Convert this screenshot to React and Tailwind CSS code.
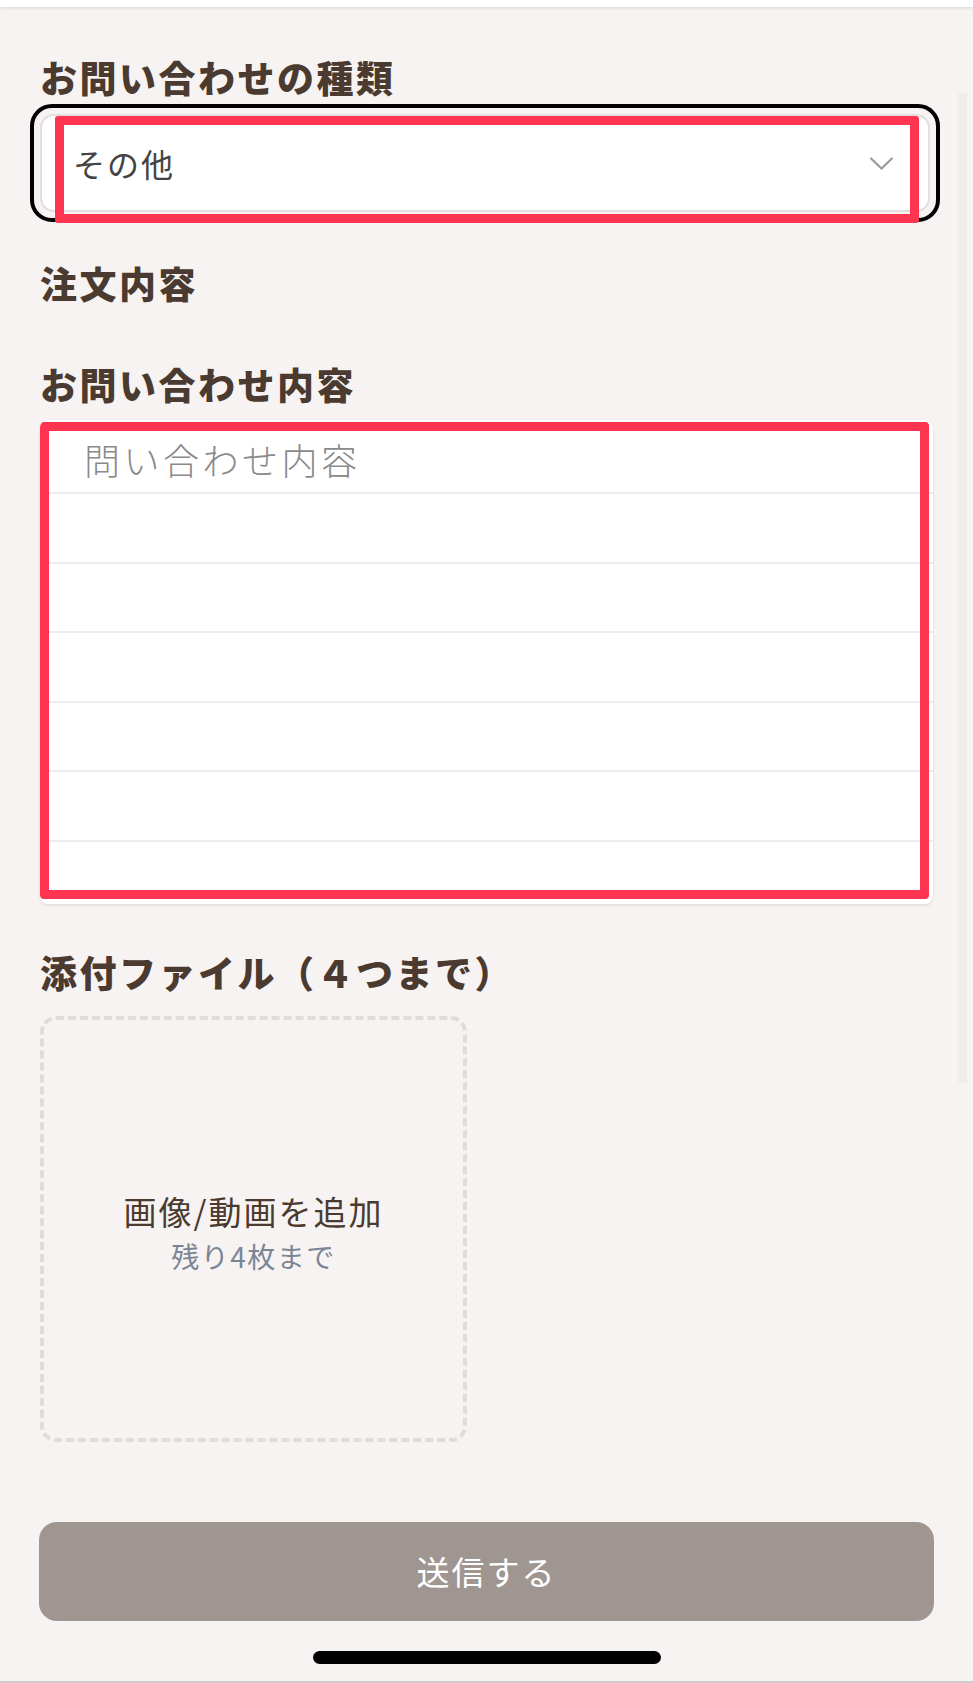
import React from 'react';

const jp = "font-['Noto_Sans_CJK_JP','Noto_Sans',sans-serif]";

function Heading({ children, className = '' }) {
  return (
    <h2 className={`text-[37px] leading-none font-black tracking-[2.5px] text-[#4a3a2f] ${className}`}>
      {children}
    </h2>
  );
}

export default function App() {
  const rows = [74, 69.5, 69.5, 69.5, 69.5, 69.5];

  return (
    <div className={`relative min-h-[1683px] w-full bg-[#f7f3f2] ${jp}`}>
      {/* top bar */}
      <div className="h-[7px] bg-white shadow-[0_2px_3px_rgba(0,0,0,0.08)]" />

      {/* faint scroll track */}
      <div className="absolute right-[6px] top-[93px] h-[990px] w-[9px] bg-[#f1edec]" />

      <div className="px-[40px]">
        <Heading className="mt-[52px]">お問い合わせの種類</Heading>

        {/* select with focus ring */}
        <div className="relative mt-[8px] ml-[-10px] mr-[-7px] rounded-[22px] border-4 border-black p-[6px]">
          <div className="flex h-[98px] items-center justify-between rounded-[14px] border-2 border-[#e1dfdf] bg-white pl-[31px] pr-[34px]">
            <span className="text-[32px] leading-none tracking-[2px] text-[#444]">その他</span>
            <svg width="25" height="15" viewBox="0 0 25 15" fill="none">
              <polyline points="1.5,2 12.5,12.5 23.5,2" stroke="#9a9a9a" strokeWidth="2.2" />
            </svg>
          </div>
          <div className="absolute left-[21px] top-[8px] h-[107px] w-[864px] rounded-[3px] border-[9px] border-[#fe3451]" />
        </div>

        <Heading className="mt-[43px]">注文内容</Heading>

        <Heading className="mt-[64px]">お問い合わせ内容</Heading>

        {/* lined textarea */}
        <div className="relative mt-[17px] h-[484px] overflow-hidden rounded-[8px] bg-white shadow-[0_1px_3px_rgba(0,0,0,0.12)]">
          {rows.map((h, i) => (
            <div
              key={i}
              className={`border-b-2 border-[#ededed] ${i === 0 ? 'h-[74px] flex items-center pl-[44px]' : 'h-[69.5px]'}`}
            >
              {i === 0 && (
                <span className="mt-[6px] text-[36px] leading-none tracking-[3.5px] text-[#8a8a8a] font-light">問い合わせ内容</span>
              )}
            </div>
          ))}
          <div className="absolute left-0 top-[2px] h-[477px] w-[889px] rounded-[4px] border-[9px] border-[#fe3451]" />
        </div>

        <Heading className="mt-[50px]">添付ファイル（４つまで）</Heading>

        {/* upload box */}
        <div className="mt-[25px] flex h-[426px] w-[427px] flex-col items-center justify-center rounded-[16px] border-4 border-dashed border-[#dfdcdb]">
          <span className="mt-[6px] text-[33px] leading-none tracking-[2px] text-[#4a3a2f]">画像/動画を追加</span>
          <span className="mt-[14px] text-[28px] leading-none tracking-[1.5px] text-[#7b8594]">残り4枚まで</span>
        </div>

        <button className="mt-[80px] ml-[-1px] flex h-[99px] w-[895px] items-center justify-center rounded-[18px] bg-[#a09691] text-[33px] tracking-[2px] text-white">
          送信する
        </button>

        <div className="mx-auto mt-[30px] h-[13px] w-[348px] rounded-full bg-black" />
      </div>
      <div className="absolute bottom-0 left-0 h-[2px] w-full bg-[#d0cccb]" />
    </div>
  );
}
